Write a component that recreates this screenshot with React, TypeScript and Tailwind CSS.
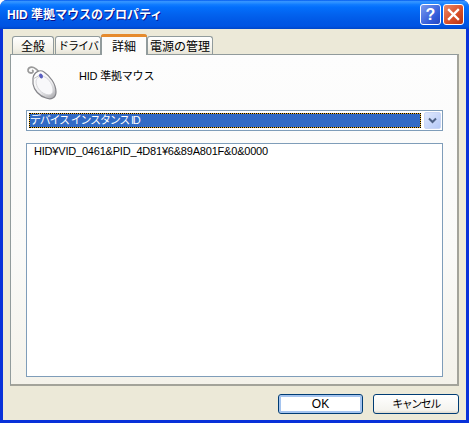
const font = "font-['Liberation_Sans','Noto_Sans_CJK_JP',sans-serif]";

function Tab({ label, active, w, text = "text-[12px]" }: { label: string; active?: boolean; w: string; text?: string }) {
  if (active) {
    return (
      <div className={`${w} h-[21px] -ml-px mb-[-1px] z-10 relative rounded-t-[3px] bg-[#fcfcfb] border-x border-[#919b9c] flex flex-col`}>
        <div className="h-[3px] -mx-px rounded-t-[3px] bg-[#e68b2c] border-t border-[#e68b2c] shrink-0" />
        <div className={`flex-1 flex items-center justify-center whitespace-nowrap pt-px text-black ${text}`}>{label}</div>
      </div>
    );
  }
  return (
    <div className={`${w} h-[18px] mr-px rounded-t-[3px] border border-b-0 border-[#919b9c] bg-[linear-gradient(#fff,#f3f1e8_70%,#e6e3d6)] flex items-center justify-center whitespace-nowrap pt-[2px] text-black ${text}`}>
      {label}
    </div>
  );
}

function MouseIcon() {
  return (
    <svg width="36" height="38" viewBox="0 0 36 38" fill="none">
      <defs>
        <linearGradient id="body" x1="0.2" y1="0" x2="0.8" y2="1">
          <stop offset="0" stopColor="#ffffff" />
          <stop offset="0.6" stopColor="#eeeef0" />
          <stop offset="1" stopColor="#b0b0b4" />
        </linearGradient>
      </defs>
      <path d="M13 10C10 6 6 4 3 6C1 8 2 11 5 11C7 11 8 9 6 8" stroke="#9a9a9a" strokeWidth="1.8" />
      <path d="M7 16C8 10 14 7 18 10C24 14 30 22 30 30C30 36 25 38 20 36C13 34 8 28 7 22C7 20 7 18 7 16Z" fill="url(#body)" stroke="#85858a" strokeWidth="1.2" />
      <path d="M10 19C10 25 14 30 19 32C24 34 27 32 27 28C27 23 23 17 19 15C15 13 11 15 10 19Z" fill="#f8f8fa" stroke="#d6d6da" strokeWidth="1" />
      <path d="M7 17L14 13" stroke="#b4b4b8" strokeWidth="0.8" />
      <ellipse cx="15" cy="14" rx="1.8" ry="2.6" fill="#5a5fc0" transform="rotate(-25 15 14)" />
    </svg>
  );
}

export default function App() {
  return (
    <div className={`${font} w-[469px] h-[423px] flex flex-col overflow-hidden rounded-t-[7px] bg-[#0831d9]`}>
      <div className="h-[29px] shrink-0 flex items-center pl-[7px] pr-[5px] bg-[linear-gradient(#0058ee,#3593ff_5%,#288eff_10%,#127dff_15%,#036ffc_25%,#0262ee_50%,#0057e5_75%,#0054e3_90%,#0046c8)]">
        <span className="flex-1 pt-px text-[12px] font-bold text-white [text-shadow:1px_1px_#0f1089]">HID 準拠マウスのプロパティ</span>
        <div className="flex gap-[2px]">
          <div className="w-[21px] h-[21px] rounded-[3px] border border-white bg-[linear-gradient(135deg,#7a9bee,#2f59d8_70%,#2446c0)] flex items-center justify-center text-[16px] font-bold text-white leading-none">?</div>
          <div className="w-[21px] h-[21px] rounded-[3px] border border-white bg-[linear-gradient(135deg,#ea8a6a,#d9502a_55%,#b83212)] flex items-center justify-center">
            <svg width="13" height="13" viewBox="0 0 13 13">
              <path d="M2 2L11 11M11 2L2 11" stroke="#fff" strokeWidth="2.4" strokeLinecap="square" />
            </svg>
          </div>
        </div>
      </div>

      <div className="flex-1 flex flex-col mx-[3px] mb-[3px] bg-[#ece9d8] px-[7px]">
        <div className="h-[25px] shrink-0 flex items-end pl-[2px]">
          <Tab label="全般" w="w-[42px]" />
          <Tab label="ドライバ" w="w-[46px]" text="text-[11px] tracking-[-1px]" />
          <Tab label="詳細" active w="w-[46px]" />
          <Tab label="電源の管理" w="w-[66px]" />
        </div>

        <div className="h-[332px] shrink-0 border border-[#919b9c] border-b-2 border-r-2 border-r-[#a3a39a] border-b-[#a3a39a] bg-[linear-gradient(#fdfdfd,#fafaf8_60%,#f4f2ea)] pl-[15px] pr-[14px] flex flex-col">
          <div className="h-[55px] shrink-0 flex items-start pt-[8px]">
            <div className="w-[53px] -mt-[1px]"><MouseIcon /></div>
            <span className="text-[11px] tracking-[-0.2px] text-black mt-[5px]">HID 準拠マウス</span>
          </div>

          <div className="h-[21px] shrink-0 border border-[#7f9db9] bg-white flex items-center p-[2px] pr-[1px]">
            <div className="flex-1 h-full bg-[#e8b030] border border-dotted border-black">
              <div className="h-full bg-[#316ac5] flex items-center text-[11px] tracking-[-1.2px] text-white leading-none">デバイス インスタンス ID</div>
            </div>
            <div className="w-[17px] h-[17px] ml-[3px] rounded-[2px] bg-[linear-gradient(135deg,#dfe8fd,#b5c9f7)] border border-[#c9d6f5] flex items-center justify-center">
              <svg width="9" height="7" viewBox="0 0 9 7">
                <path d="M1 1.5L4.5 5L8 1.5" stroke="#4d6185" strokeWidth="2" fill="none" />
              </svg>
            </div>
          </div>

          <div className="h-[234px] shrink-0 mt-[12px] border border-[#7f9db9] bg-white px-[7px] py-0 text-[11px] tracking-[-0.2px] text-black leading-[15px]">
            HID¥VID_0461&PID_4D81¥6&89A801F&0&0000
          </div>
        </div>

        <div className="flex-1 flex justify-end items-start pt-[8px] gap-[10px]">
          <button className="w-[85px] h-[20px] rounded-[3px] border border-[#003c74] bg-white shadow-[inset_0_0_0_2px_#a5c4ef] text-[12px] text-black flex items-center justify-center">OK</button>
          <button className="w-[86px] h-[20px] rounded-[3px] border border-[#003c74] bg-[linear-gradient(#fff,#f4f3ee_85%,#dcd8ce)] text-[11px] tracking-[-1.5px] text-black flex items-center justify-center">キャンセル</button>
        </div>
      </div>
    </div>
  );
}
